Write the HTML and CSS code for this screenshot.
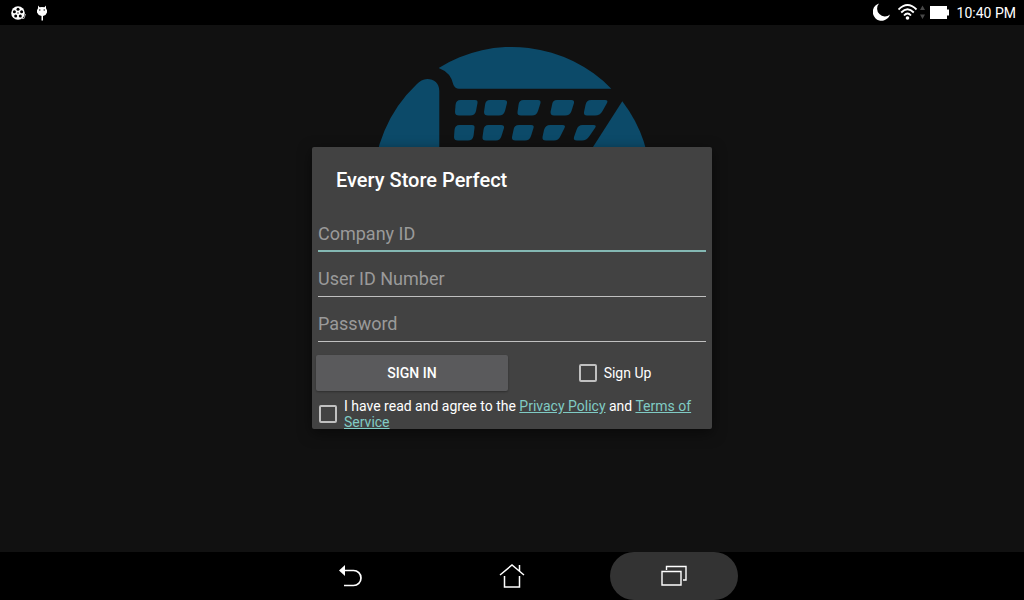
FILE: index.html
```html
<!DOCTYPE html>
<html lang="en">
<head>
    <meta charset="UTF-8">
    <meta name="viewport" content="width=device-width, initial-scale=1.0">
    <title>Every Store Perfect</title>
    <link rel="stylesheet" href="styles.css">
</head>
<body>
    <header class="status-bar">
        <div class="status-group">
            <svg width="16" height="14" viewBox="0 0 16 14">
                <circle cx="7" cy="7" r="6.800" fill="#fff"/>
                <path d="M11 12.500H13L14.500 8" fill="none" stroke="#aaa"/>
                <g fill="#000">
                    <circle cx="7" cy="3.200" r="1.500"/>
                    <circle cx="10.600" cy="5.800" r="1.500"/>
                    <circle cx="9.300" cy="10.100" r="1.500"/>
                    <circle cx="4.700" cy="10.100" r="1.500"/>
                    <circle cx="3.400" cy="5.800" r="1.500"/>
                    <circle cx="7" cy="7" r="0.700"/>
                </g>
            </svg>
            <svg width="12" height="16" viewBox="0 0 12 16">
                <path d="M2 0.500L3.500 2.200Q6 1.600 8.500 2.200L10 0.500L10 3.200Q11.500 5 11 7.500Q10 10.600 7 11V15.500H5.500V11Q2.200 10.600 1 7.500Q0.500 5 2 3.200Z" fill="#fff"/>
                <circle cx="3.800" cy="5" r="0.700" fill="#000"/>
                <circle cx="8.200" cy="5" r="0.700" fill="#000"/>
            </svg>
        </div>
        <div class="status-group status-right">
            <svg width="18" height="18" viewBox="0 0 18 18">
                <path d="M6 0.500A8.800 8.800 0 1 0 17 11.500A7.800 7.800 0 0 1 6 0.500Z" fill="#fff"/>
            </svg>
            <svg width="28" height="18" viewBox="0 0 28 18">
                <g fill="none" stroke="#fff" stroke-width="1.800">
                    <path d="M0.500 6.500Q9.500 -2.500 18.500 6.500"/>
                    <path d="M3.200 9.500Q9.500 3 15.800 9.500"/>
                    <path d="M6 12.500Q9.500 8.500 13 12.500"/>
                </g>
                <circle cx="9.500" cy="15" r="1.800" fill="#fff"/>
                <path d="M22 7l2.500-4.500 2.500 4.500zM22 11.500l2.500 4.500 2.500-4.500z" fill="#484848"/>
            </svg>
            <svg width="19" height="13" viewBox="0 0 19 13">
                <path d="M0 0H17V3.500H19V9.500H17V13H0Z" fill="#fff"/>
            </svg>
            <span class="clock">10:40 PM</span>
        </div>
    </header>

    <main class="screen">
        <svg class="logo" width="280" height="140" viewBox="0 0 280 140">
            <path d="M66.700 22A138.600 138.600 0 0 1 239.300 42.700H87Q83 42.700 81.500 39Q79 26.500 66.700 22Z"/>
            <path d="M67.300 140V45C67.300 37 62 33 55.300 33Q49 33.500 44.700 38.300A138.600 138.600 0 0 0 1.400 140Z"/>
            <path d="M250.300 55.300A138.600 138.600 0 0 1 278.600 140H196Z"/>
            <!-- basket cells, top row -->
            <path d="M88.500 54H103Q106 54 105.500 57L104 65Q103 69.500 98 69.500H87Q83 69.500 83 66L83.500 59Q84 54 88.500 54Z"/>
            <path d="M118 54H132Q135.500 54 135 57L133 65Q131.500 69.500 127 69.500H116Q112 69.500 112 66L113 59Q113.500 54 118 54Z"/>
            <path d="M151.500 54H166Q169 54 168.500 57L166 65Q164.500 69.500 160 69.500H149Q145 69.500 145.500 66L146.500 59Q147 54 151.500 54Z"/>
            <path d="M185 54H199.500Q202.500 54 202 57L199.500 65Q198 69.500 193 69.500H182Q178.500 69.500 178.500 66L180 59Q180.500 54 185 54Z"/>
            <path d="M219 54H233Q236.500 54 235 57L230.500 65Q228 69.500 223 69.500H215Q211.500 69.500 212 66L213.500 59Q214.500 54 219 54Z"/>
            <!-- bottom row -->
            <path d="M87.500 79H100Q103 79 102.500 82L101.500 90Q100.500 94.500 96 94.500H86Q82 94.500 82 91L82.500 84Q83 79 87.500 79Z"/>
            <path d="M116.500 79H129Q132.500 79 132 82L129.500 90Q128 94.500 124 94.500H114Q110 94.500 110.500 91L111.500 84Q112 79 116.500 79Z"/>
            <path d="M147 79H159Q162.500 79 161.500 82L159 90Q157.500 94.500 153 94.500H143.500Q139.500 94.500 140 91L141.500 84Q142 79 147 79Z"/>
            <path d="M178 79H190.500Q194 79 192.500 82L188.500 90Q186.500 94.500 182 94.500H174Q170 94.500 170.500 91L172 84Q173.500 79 178 79Z"/>
            <path d="M210.500 79H221.500Q225 79 223 82L217.500 90Q214.500 94.500 210 94.500H205Q201 94.500 202 91L204.500 84Q206 79 210.500 79Z"/>
        </svg>

        <form class="dialog">
            <h1 class="dialog-title">Every Store Perfect</h1>
            <div class="fields">
                <input class="field field-active" type="text" placeholder="Company ID" aria-label="Company ID">
                <input class="field" type="text" placeholder="User ID Number" aria-label="User ID Number">
                <input class="field" type="password" placeholder="Password" aria-label="Password">
            </div>
            <div class="actions">
                <button class="btn" type="button">SIGN IN</button>
                <div class="check-row">
                    <input class="check" type="checkbox" id="signup">
                    <label for="signup">Sign Up</label>
                </div>
            </div>
            <div class="terms">
                <input class="check" type="checkbox" id="agree">
                <label for="agree">I have read and agree to the <a href="#">Privacy Policy</a> and <a href="#">Terms of Service</a></label>
            </div>
        </form>
    </main>

    <nav class="nav-bar">
        <button class="nav-btn" aria-label="Back">
            <svg width="24" height="24" viewBox="0 0 24 24">
                <path d="M1 6.500L7 1V12Z" fill="#fff"/>
                <path d="M6 6.500H15.500A7.500 7.500 0 0 1 15.500 21.500H6" fill="none" stroke="#fff" stroke-width="1.700"/>
            </svg>
        </button>
        <button class="nav-btn" aria-label="Home">
            <svg width="26" height="26" viewBox="0 0 26 26">
                <path d="M1 12L13 2L25 12M20.500 8V2M5.500 13V24H20.500V13" fill="none" stroke="#fff" stroke-width="1.500"/>
            </svg>
        </button>
        <button class="nav-btn nav-btn-active" aria-label="Recent apps">
            <svg width="26" height="22" viewBox="0 0 26 22">
                <path d="M1 6.500H20V20H1ZM5.500 5V1.500H25V15H22" fill="none" stroke="#fff" stroke-width="1.400"/>
            </svg>
        </button>
    </nav>
</body>
</html>
```

FILE: styles.css
```css
:root{
    --bg-color:#111111;
    --dialog-color:#424242;
    --accent-color:#80cbc4;
    --line-color:#c0c0c0;
    --logo-color:#0c4a69;
}
*{
    box-sizing: border-box;
}
body{
    margin: 0;
    min-height: 100vh;
    display: flex;
    flex-direction: column;
    background-color: var(--bg-color);
    color: #fff;
    font-family: Roboto, "Liberation Sans", sans-serif;
    font-size: 14px;
}
svg{
    display: block;
}
.status-bar{
    display: flex;
    justify-content: space-between;
    height: 25px;
    padding: 0 8px 0 11px;
    background-color: #000;
}
.status-group{
    display: flex;
    align-items: center;
    gap: 9px;
}
.status-right{
    gap: 7px;
    padding-bottom: 1px;
}
.status-right svg + svg + svg{
    margin-left: -3px;
}
.clock{
    padding: 2px 0 0 1px;
}
.screen{
    flex: 1;
    display: grid;
    place-items: center;
    padding-bottom: 1px;
}
.logo,
.dialog{
    grid-area: 1 / 1;
}
.logo{
    align-self: start;
    margin-top: 21px;
    fill: var(--logo-color);
}
.dialog{
    z-index: 1;
    width: 100%;
    max-width: 400px;
    overflow: hidden;
    background-color: var(--dialog-color);
    border-radius: 2px;
    box-shadow: 0 4px 14px rgba(0, 0, 0, 0.5);
}
.dialog-title{
    margin: 0;
    padding: 20px 24px 0;
    font-size: 20px;
    font-weight: 500;
    line-height: 26px;
}
.fields{
    display: flex;
    flex-direction: column;
    gap: 9px;
    padding: 23px 6px 13px;
}
.field{
    width: 100%;
    height: 36px;
    padding: 0;
    border: 0;
    border-bottom: 1px solid var(--line-color);
    outline: 0;
    background: none;
    color: #fff;
    font-family: inherit;
    font-size: 18px;
}
.field::placeholder{
    color: #9a9a9a;
    opacity: 1;
}
.field-active{
    padding-top: 1px;
    border-bottom: 2px solid #84b8b3;
}
.actions{
    display: grid;
    grid-template-columns: 1fr 1fr;
    align-items: center;
}
.btn{
    height: 36px;
    margin: 0 4px;
    border: 0;
    border-radius: 2px;
    background-color: #5a5a5c;
    box-shadow: 0 1px 2px rgba(0, 0, 0, 0.3);
    color: #fff;
    font-family: inherit;
    font-size: 14px;
    font-weight: 500;
    cursor: pointer;
}
.check-row{
    display: flex;
    justify-content: center;
    align-items: center;
    gap: 7px;
    padding-left: 6px;
}
.check{
    appearance: none;
    flex: none;
    width: 18px;
    height: 18px;
    margin: 0;
    border: 2px solid var(--line-color);
    border-radius: 2px;
}
.check:checked{
    background-color: var(--accent-color);
}
.terms{
    display: flex;
    align-items: center;
    gap: 7px;
    height: 38px;
    padding: 8px 16px 0 7px;
    line-height: 16px;
}
.terms a{
    color: var(--accent-color);
}
.nav-bar{
    display: flex;
    justify-content: center;
    gap: 34px;
    height: 48px;
    background-color: #000;
}
.nav-btn{
    display: flex;
    justify-content: center;
    align-items: center;
    width: 128px;
    padding: 0;
    border: 0;
    border-radius: 24px;
    background: none;
}
.nav-btn-active{
    background-color: #333;
}
```
